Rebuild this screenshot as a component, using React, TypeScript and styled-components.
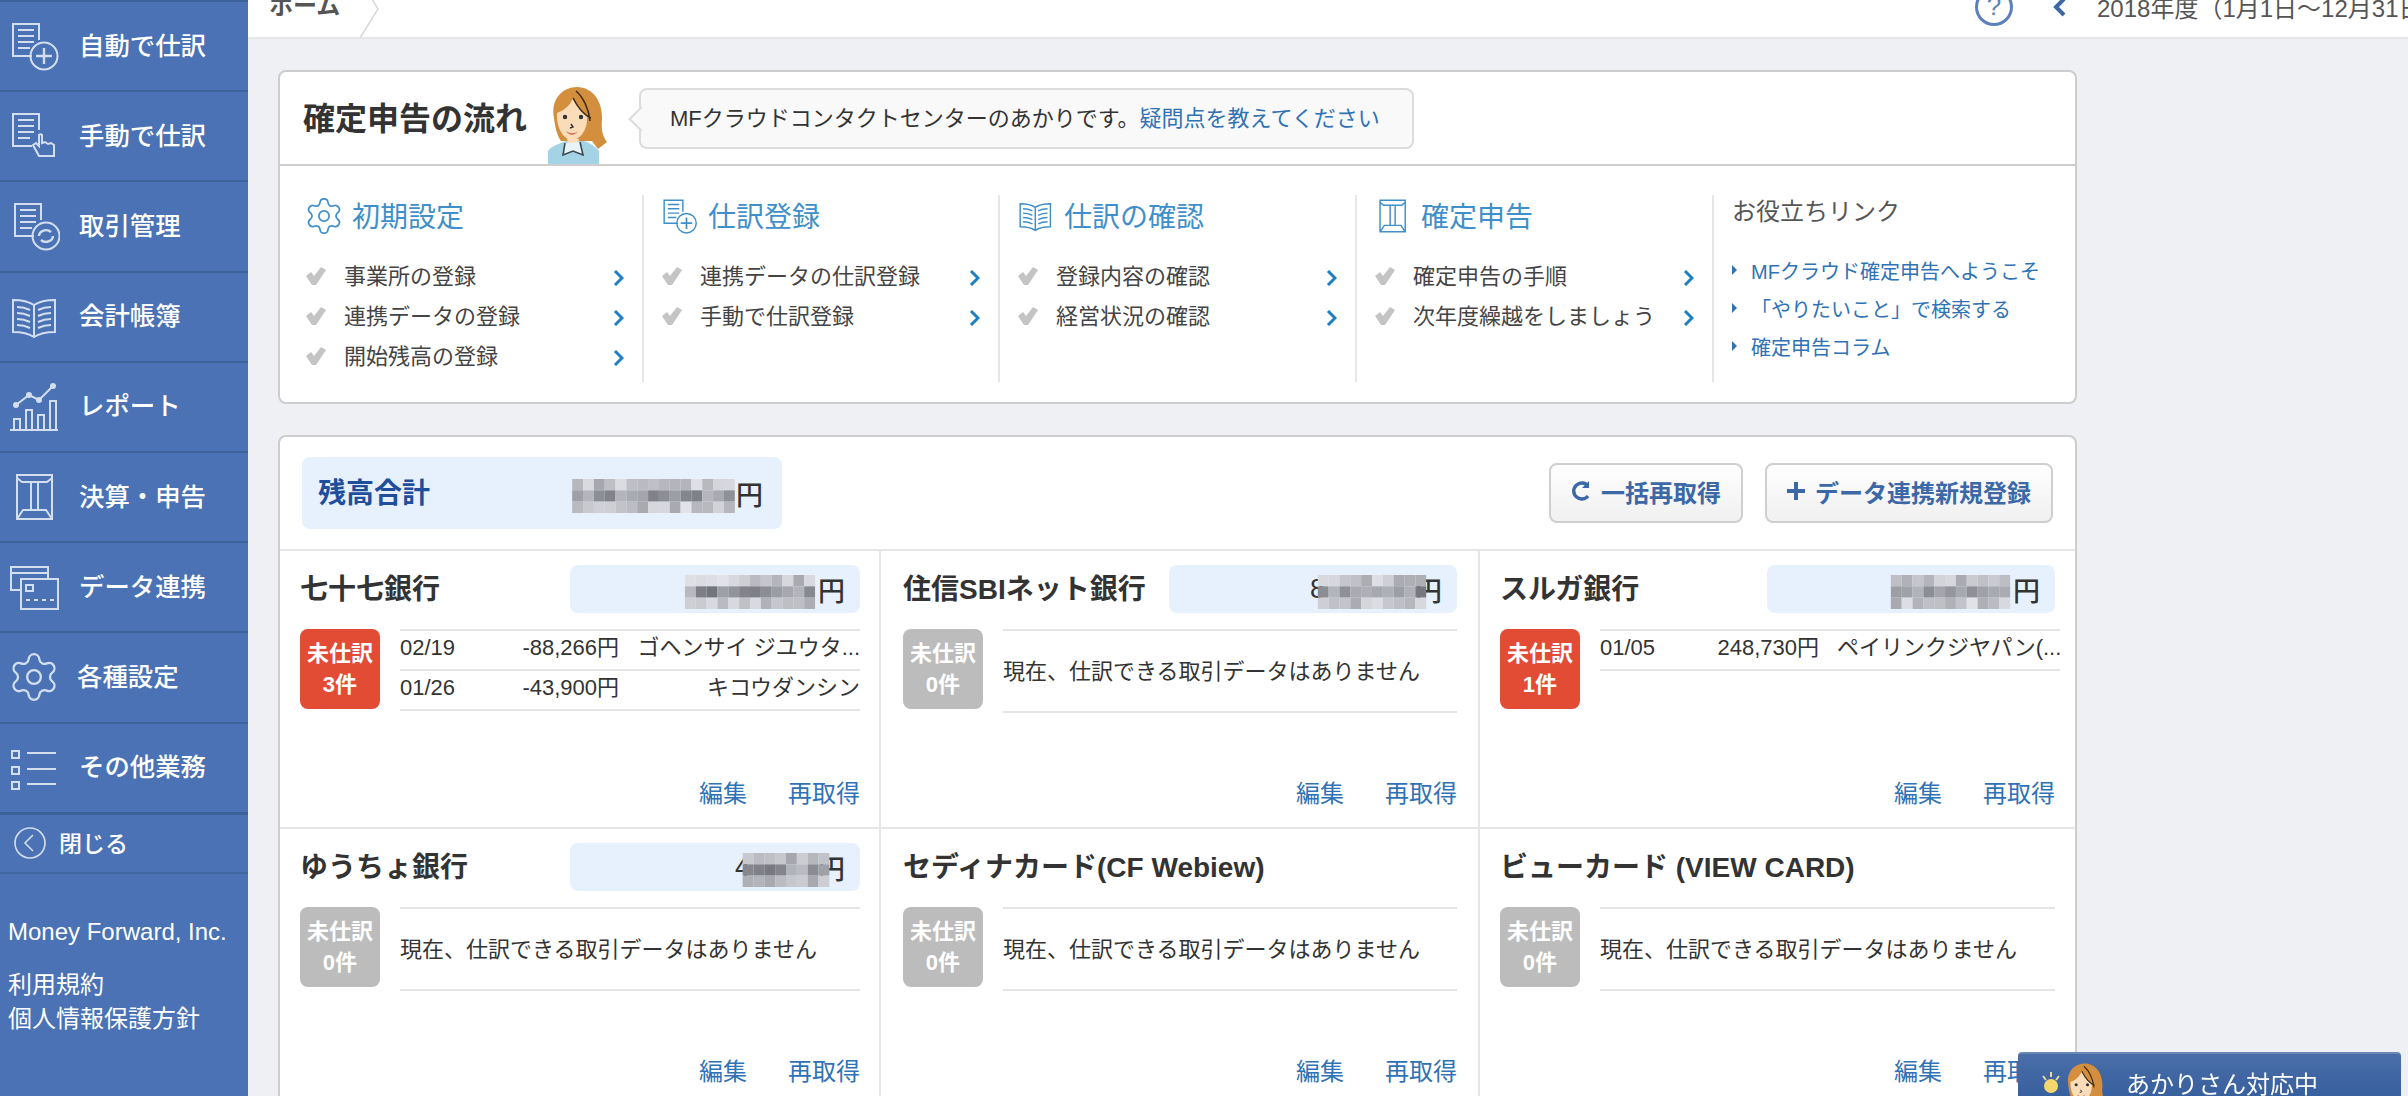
import React from "react";
import styled, { createGlobalStyle } from "styled-components";
import { Settings } from "lucide-react";

const GlobalStyle = createGlobalStyle`
    html, body {
        margin: 0;
        padding: 0;
        height: 100%;
        overflow: hidden;
        background: #eef0f4;
        color: #333;
        font-family: "Liberation Sans", "Noto Sans CJK JP", sans-serif;
    }
    * { box-sizing: border-box; }
`;

const Page = styled.div`
    display: flex;
    width: 2408px;
    height: 1096px;
    overflow: hidden;
`;

/* ---------- icons ---------- */

type IconProps = { size?: number };

const IconSvg = styled.svg`
    flex: none;
    fill: none;
    stroke: currentColor;
    stroke-width: 2;
`;

const DocLines = () => <>
    <path d="M29 19V3H3v32h19"/>
    <path d="M8 9h16M8 15h16M8 21h16M8 27h12"/>
</>;

const DocPlusIcon = ({size = 50}: IconProps) => <IconSvg width={size} height={size} viewBox="0 0 50 50">
    <DocLines/>
    <circle cx="34" cy="35" r="13.5"/>
    <path d="M34 27v16M26 35h16" strokeWidth="2.4"/>
</IconSvg>;

const DocHandIcon = ({size = 50}: IconProps) => <IconSvg width={size} height={size} viewBox="0 0 50 50">
    <DocLines/>
    <path d="M29 24v11l-3-3-3 2 6 11h15V34l-3-2-3 1-3-2-3 1v-8a2 2 0 0 0-3 0z"/>
</IconSvg>;

const DocRefreshIcon = ({size = 50}: IconProps) => <IconSvg width={size} height={size} viewBox="0 0 50 50">
    <g transform="translate(2 0)">
        <DocLines/>
        <circle cx="34" cy="35" r="13.5"/>
        <path d="M27 35a7 6 0 0 1 12-4M41 35a7 6 0 0 1-12 4" strokeWidth="2.4"/>
    </g>
</IconSvg>;

const BookIcon = ({size = 50}: IconProps) => <IconSvg width={size} height={size} viewBox="0 0 50 50">
    <path d="M24 13C18 9 10 8 3 8v32c7 0 15 1 21 5 6-4 14-5 21-5V8c-7 0-15 1-21 5zM24 13v32"/>
    <path d="M7 15c4 0 9 1 13 3M7 21c4 0 9 1 13 3M7 27c4 0 9 1 13 3M7 33c4 0 9 1 13 3M41 15c-4 0-9 1-13 3M41 21c-4 0-9 1-13 3M41 27c-4 0-9 1-13 3M41 33c-4 0-9 1-13 3"/>
</IconSvg>;

const ChartIcon = ({size = 50}: IconProps) => <IconSvg width={size} height={size} viewBox="0 0 50 50">
    <path d="M0 48h48M4 48V37h6v11M16 48V28h6v20M28 48V33h6v15M40 48V19h6v29"/>
    <path d="M6 23l13-10 10 5L43 4"/>
    <circle cx="6" cy="23" r="2" fill="currentColor"/>
    <circle cx="19" cy="13" r="2" fill="currentColor"/>
    <circle cx="29" cy="18" r="2" fill="currentColor"/>
    <circle cx="43" cy="4" r="2" fill="currentColor"/>
</IconSvg>;

const EnvelopeIcon = ({size = 50}: IconProps) => <IconSvg width={size} height={size} viewBox="0 0 50 50">
    <path d="M7 3h35v44H7zM7 6l5 4h25l5-4M21 10v28M28 10v28M7 47l6-9h23l6 9"/>
</IconSvg>;

const CardsIcon = ({size = 50}: IconProps) => <IconSvg width={size} height={size} viewBox="0 0 50 50">
    <path d="M38 17V5H1v23h10M1 11h37"/>
    <path d="M11 17h37v30H11z"/>
    <path d="M16 23h7v6h-7zM16 38h4M24 38h4M32 38h4M40 38h4"/>
</IconSvg>;

const ListIcon = ({size = 50}: IconProps) => <IconSvg width={size} height={size} viewBox="0 0 50 50">
    <path d="M2 8h7v7H2zM2 24h7v7H2zM2 39h7v7H2z"/>
    <path d="M17 10h29M17 26h29M17 41h29"/>
</IconSvg>;

const GearIcon = ({size = 50}: IconProps) => <Settings size={size} viewBox="1.5 1.5 21 21" strokeWidth={1}/>;

const CheckMark = () => <svg width="20" height="18" viewBox="0 0 20 18">
    <path d="M0 9l5-4 3 4 7-9 5 3-10 15H6z" fill="#c4c4c4"/>
</svg>;

const ChevronMark = () => <ChevronBox width="11" height="16" viewBox="0 0 11 16">
    <path d="M2 1l7 7-7 7" fill="none" stroke="#1f7fc4" strokeWidth="3"/>
</ChevronBox>;

const ChevronBox = styled.svg`
    margin-top: 3px;
`;

const Akari = ({height}: {height: number}) => <svg height={height} viewBox="0 0 62 79">
    <path d="M3 66c3-5 13-8 18-10h18c6 2 11 5 15 10v13H3z" fill="#a5d3e6"/>
    <path d="M9 33C5 14 18 2 32 2c16 0 26 15 25 33-1 10 1 17 5 22l-9 7-6-8H16c-4-6-6-14-7-23z" fill="#d38f3d"/>
    <path d="M12 28c6-2 13-7 16-15 4 9 9 15 14 18 1 14-7 24-15 24S11 43 12 28z" fill="#fbdcb9"/>
    <path d="M22 54h12l-2 8-4 3-4-3z" fill="#fbdcb9"/>
    <path d="M20 58l-2 12 10-4 10 4-3-13" fill="#e8f4f8" stroke="#3c4a50" strokeWidth="1.6"/>
    <path d="M28 13c5 10 11 17 18 20M31 6c7 6 13 18 14 30" fill="none" stroke="#3b2a18" strokeWidth="1.6"/>
    <circle cx="20" cy="32" r="2.2" fill="#333"/>
    <circle cx="36" cy="32" r="2.2" fill="#333"/>
    <path d="M26 39l2 3-3 1" fill="none" stroke="#333" strokeWidth="1.4"/>
    <path d="M21 46c4 3 9 3 12 0-3 5-9 5-12 0z" fill="#d9695a"/>
</svg>;

/* the amounts are pixelated out in the screenshot */
const Mosaic = ({cols, seed, $left = 0, $right = 0}: {cols: number, seed: number, $left?: number, $right?: number}) => {
    const rects = [];
    for (let r = 0; r < 3; r++) {
        for (let c = 0; c < cols; c++) {
            const n = Math.abs(Math.sin((c + 1) * 12.9898 + (r + 1) * 78.233 + seed) * 43758.5453) % 1;
            const base = r === 1 ? 115 + n * 70 : 165 + n * 60;
            const v = Math.round(base);
            rects.push(<rect key={r + "-" + c} x={c * 11} y={r * 11.5} width="11" height="11.5" fill={`rgb(${v},${v + 2},${v + 8})`}/>);
        }
    }
    return <MosaicSvg width={cols * 11} height={34} viewBox={`0 0 ${cols * 11} 34.5`} $left={$left} $right={$right}>{rects}</MosaicSvg>;
};

const MosaicSvg = styled.svg<{$left: number, $right: number}>`
    flex: none;
    position: relative;
    z-index: 1;
    margin-top: 6px;
    margin-left: ${p => p.$left}px;
    margin-right: ${p => p.$right}px;
    filter: blur(0.7px);
`;

/* ---------- sidebar ---------- */

const Sidebar = styled.nav`
    flex: none;
    width: 248px;
    height: 100%;
    background: #4a72b4;
    color: #fff;
`;

const NavItem = styled.a`
    display: flex;
    align-items: center;
    height: 90.2px;
    padding-left: 10px;
    gap: 19px;
    border-top: 2px solid #3d6299;
    font-size: 25.4px;
    font-weight: 500;
    svg { color: #d3deee; }
    span { padding-bottom: 5px; }
`;

const CloseRow = styled.a`
    display: flex;
    align-items: center;
    height: 62px;
    padding-left: 14px;
    gap: 13px;
    border-top: 3px solid #3d6299;
    border-bottom: 2px solid #41689f;
    font-size: 23px;
    font-weight: 500;
    svg { color: #d3deee; }
    span { padding-bottom: 3px; }
`;

const SideFooter = styled.div`
    padding: 41px 0 0 8px;
    font-size: 24px;
    line-height: 34px;
`;

const CompanyName = styled.div`
    margin-bottom: 19px;
`;

/* ---------- top bar ---------- */

const Main = styled.div`
    flex: 1;
    min-width: 0;
`;

const TopBar = styled.header`
    display: flex;
    align-items: center;
    height: 69px;
    margin-top: -30px;
    padding-left: 21px;
    background: #fff;
    border-bottom: 2px solid #e6e7ea;
`;

const Crumb = styled.span`
    font-size: 24px;
    font-weight: bold;
    color: #555;
`;

const CrumbArrow = styled.svg`
    flex: none;
    margin-left: 14px;
    fill: none;
    stroke: #d8d8d8;
    stroke-width: 1.5;
`;

const PeriodNav = styled.div`
    display: flex;
    align-items: center;
    margin-left: auto;
    padding-top: 6px;
`;

const HelpCircle = styled.span`
    display: flex;
    align-items: center;
    justify-content: center;
    width: 38px;
    height: 38px;
    margin-right: 39px;
    border: 3px solid #5b80ba;
    border-radius: 50%;
    color: #5b80ba;
    font-size: 26px;
`;

const PeriodText = styled.span`
    width: 311px;
    margin-left: 29px;
    overflow: hidden;
    white-space: nowrap;
    font-size: 24px;
    color: #555;
`;

/* ---------- flow card ---------- */

const Content = styled.div`
    width: 1799px;
    margin: 31px 0 0 30px;
`;

const Card = styled.section`
    background: #fff;
    border: 2px solid #cdcdcd;
    border-radius: 8px;
    margin-bottom: 31px;
`;

const FlowHead = styled.div`
    display: flex;
    height: 94px;
    padding-left: 23px;
    align-items: center;
    border-bottom: 2px solid #cdcdcd;
`;

const FlowTitle = styled.h1`
    margin: 0;
    width: 242px;
    padding-bottom: 5px;
    font-size: 32px;
    font-weight: bold;
    color: #333;
`;

const AvatarSlot = styled.div`
    align-self: flex-end;
    display: flex;
    width: 94px;
    height: 79px;
`;

const Bubble = styled.div`
    position: relative;
    display: flex;
    align-items: center;
    width: 775px;
    height: 61px;
    padding: 0 0 5px 29px;
    background: #f9f9f9;
    border: 2px solid #dcdcdc;
    border-radius: 8px;
    font-size: 22px;
    &::before {
        content: "";
        position: absolute;
        left: -9px;
        top: 20px;
        width: 16px;
        height: 16px;
        background: #f9f9f9;
        border-left: 2px solid #dcdcdc;
        border-bottom: 2px solid #dcdcdc;
        transform: rotate(45deg);
    }
`;

const TextLink = styled.a`
    color: #2f72b5;
`;

const FlowBody = styled.div`
    display: grid;
    grid-template-columns: 362px 356px 357px 357px 1fr;
    padding: 29px 0 20px;
`;

const StepCol = styled.div<{$first?: boolean}>`
    height: 187px;
    padding: 3px 18px 0 ${p => (p.$first ? 26 : 18)}px;
    border-left: ${p => (p.$first ? "none" : "2px solid #e6e6e6")};
`;

const StepTitle = styled.div`
    display: flex;
    align-items: center;
    gap: 10px;
    height: 36px;
    margin-bottom: 22px;
    color: #3f8fcb;
    font-size: 28px;
    span { padding-bottom: 3px; }
`;

const StepRow = styled.div`
    display: flex;
    align-items: center;
    height: 40px;
    font-size: 22px;
    color: #444;
`;

const StepLabel = styled.span`
    flex: 1;
    margin-left: 18px;
    padding-bottom: 5px;
    white-space: nowrap;
`;

const LinksTitle = styled.div`
    height: 36px;
    margin-bottom: 17px;
    font-size: 24px;
    line-height: 27px;
    color: #555;
`;

const HelpLink = styled(TextLink)`
    display: flex;
    align-items: center;
    gap: 14px;
    height: 38px;
    font-size: 20px;
    white-space: nowrap;
    &::before {
        content: "";
        flex: none;
        border-left: 5px solid #2f72b5;
        border-top: 5px solid transparent;
        border-bottom: 5px solid transparent;
    }
`;

/* ---------- accounts card ---------- */

const AccountsHead = styled.div`
    display: flex;
    align-items: center;
    justify-content: space-between;
    height: 114px;
    padding: 0 22px;
    border-bottom: 2px solid #e6e6e6;
`;

const TotalBox = styled.div`
    display: flex;
    align-items: center;
    justify-content: space-between;
    width: 480px;
    height: 72px;
    padding: 0 19px 0 16px;
    background: #e6f1fd;
    border-radius: 8px;
`;

const TotalLabel = styled.span`
    padding-bottom: 5px;
    font-size: 28px;
    font-weight: bold;
    color: #1f4f9c;
`;

const Amount = styled.span`
    display: flex;
    align-items: center;
    font-size: 27px;
    font-weight: 500;
    color: #333;
`;

const HeadButtons = styled.div`
    display: flex;
    gap: 22px;
`;

const Button = styled.button`
    display: flex;
    align-items: center;
    gap: 10px;
    height: 60px;
    padding: 0 20px 4px;
    background: linear-gradient(#fff, #f0f0f0);
    border: 2px solid #cfcfcf;
    border-radius: 8px;
    font-family: inherit;
    font-size: 24px;
    font-weight: bold;
    color: #3c68a8;
    svg { flex: none; }
`;

const BankGrid = styled.div`
    display: grid;
    grid-template-columns: 601px 599px 595px;
    height: 556px;
`;

const BankCell = styled.div<{$col: number}>`
    display: flex;
    flex-direction: column;
    height: 278px;
    min-width: 0;
    padding: 14px ${p => [19, 21, 20][p.$col]}px 16px ${p => (p.$col === 1 ? 22 : 20)}px;
    border-bottom: 2px solid #e6e6e6;
    border-right: ${p => (p.$col === 2 ? "none" : "2px solid #e6e6e6")};
`;

const BankHead = styled.div`
    display: flex;
    align-items: center;
    justify-content: space-between;
    height: 48px;
    margin-bottom: 16px;
`;

const BankName = styled.h2`
    margin: 0;
    padding-bottom: 4px;
    font-size: 28px;
    font-weight: bold;
    color: #333;
    white-space: nowrap;
`;

const BalanceChip = styled.div<{$col: number}>`
    display: flex;
    align-items: center;
    justify-content: flex-end;
    width: ${p => (p.$col === 0 ? 290 : 288)}px;
    height: 48px;
    padding-right: 15px;
    background: #e6f1fd;
    border-radius: 8px;
`;

const BankBody = styled.div`
    display: flex;
    align-items: flex-start;
    gap: 20px;
`;

const Badge = styled.div<{$active: boolean}>`
    flex: none;
    display: flex;
    flex-direction: column;
    align-items: center;
    justify-content: center;
    width: 80px;
    height: 80px;
    background: ${p => (p.$active ? "#e24c35" : "#bcbcbc")};
    border-radius: 8px;
    color: #fff;
    font-size: 22px;
    font-weight: bold;
    line-height: 31px;
`;

const TxList = styled.div`
    flex: 1;
    min-width: 460px;
    border-top: 2px solid #e5e5e5;
`;

const TxRow = styled.div`
    display: grid;
    grid-template-columns: 219px 223px;
    column-gap: 18px;
    align-items: baseline;
    height: 40px;
    padding-top: 1px;
    border-bottom: 2px solid #e5e5e5;
    font-size: 22px;
    line-height: 32px;
    color: #333;
`;

const TxDate = styled.span`
    display: flex;
    align-items: baseline;
    justify-content: space-between;
`;

const TxDesc = styled.span`
    text-align: right;
    white-space: nowrap;
    overflow: hidden;
`;

const EmptyNote = styled.div`
    flex: 1;
    display: flex;
    align-items: center;
    height: 84px;
    padding-bottom: 5px;
    border-top: 2px solid #e5e5e5;
    border-bottom: 2px solid #e5e5e5;
    font-size: 22px;
    color: #333;
`;

const CellLinks = styled.div`
    display: flex;
    justify-content: flex-end;
    gap: 41px;
    margin-top: auto;
    font-size: 24px;
    line-height: 34px;
`;

const ChatTab = styled.div`
    position: fixed;
    right: 7px;
    bottom: 0;
    display: flex;
    align-items: flex-start;
    width: 383px;
    height: 44px;
    padding: 8px 0 0 22px;
    overflow: hidden;
    background: linear-gradient(#4a6ea8, #37609e);
    border-top: 2px solid #6c87b3;
    border-radius: 4px 4px 0 0;
    color: #fff;
    font-size: 24px;
`;

const ChatBulb = styled.svg`
    flex: none;
    margin: 8px 0 0 0;
`;

const ChatText = styled.span`
    margin-left: 20px;
    padding-top: 3px;
    white-space: nowrap;
`;

/* ---------- data ---------- */

const navItems = [
    {label: "自動で仕訳", icon: <DocPlusIcon/>},
    {label: "手動で仕訳", icon: <DocHandIcon/>},
    {label: "取引管理", icon: <DocRefreshIcon/>},
    {label: "会計帳簿", icon: <BookIcon/>},
    {label: "レポート", icon: <ChartIcon/>},
    {label: "決算・申告", icon: <EnvelopeIcon/>},
    {label: "データ連携", icon: <CardsIcon/>},
    {label: "各種設定", icon: <GearIcon size={48}/>},
    {label: "その他業務", icon: <ListIcon/>},
];

const steps = [
    {title: "初期設定", icon: <GearIcon size={36}/>, items: ["事業所の登録", "連携データの登録", "開始残高の登録"]},
    {title: "仕訳登録", icon: <DocPlusIcon size={36}/>, items: ["連携データの仕訳登録", "手動で仕訳登録"]},
    {title: "仕訳の確認", icon: <BookIcon size={36}/>, items: ["登録内容の確認", "経営状況の確認"]},
    {title: "確定申告", icon: <EnvelopeIcon size={36}/>, items: ["確定申告の手順", "次年度繰越をしましょう"]},
];

const helpLinks = ["MFクラウド確定申告へようこそ", "「やりたいこと」で検索する", "確定申告コラム"];

type Bank = {
    name: string,
    mosaic?: {cols: number, seed: number, lead?: string, overlap?: boolean},
    count: number,
    rows: string[][],
};

const banks: Bank[] = [
    {name: "七十七銀行", mosaic: {cols: 12, seed: 3}, count: 3, rows: [
        ["02/19", "-88,266円", "ゴヘンサイ ジユウタ..."],
        ["01/26", "-43,900円", "キコウダンシン"],
    ]},
    {name: "住信SBIネット銀行", mosaic: {cols: 10, seed: 7, lead: "8", overlap: true}, count: 0, rows: []},
    {name: "スルガ銀行", mosaic: {cols: 11, seed: 11}, count: 1, rows: [
        ["01/05", "248,730円", "ペイリンクジヤパン(..."],
    ]},
    {name: "ゆうちょ銀行", mosaic: {cols: 8, seed: 17, lead: "4", overlap: true}, count: 0, rows: []},
    {name: "セディナカード(CF Webiew)", count: 0, rows: []},
    {name: "ビューカード (VIEW CARD)", count: 0, rows: []},
];

export default function App () {
    return <Page>
        <GlobalStyle/>
        <Sidebar>
            {navItems.map(item => <NavItem key={item.label}>{item.icon}<span>{item.label}</span></NavItem>)}
            <CloseRow>
                <svg width="32" height="32" viewBox="0 0 32 32" fill="none" stroke="currentColor" strokeWidth="1.6">
                    <circle cx="16" cy="16" r="15"/>
                    <path d="M19 8l-8 8 8 8"/>
                </svg>
                <span>閉じる</span>
            </CloseRow>
            <SideFooter>
                <CompanyName>Money Forward, Inc.</CompanyName>
                <div>利用規約</div>
                <div>個人情報保護方針</div>
            </SideFooter>
        </Sidebar>

        <Main>
            <TopBar>
                <Crumb>ホーム</Crumb>
                <CrumbArrow width="26" height="68" viewBox="0 0 26 68"><path d="M0 0l24 39-18 29"/></CrumbArrow>
                <PeriodNav>
                    <HelpCircle>?</HelpCircle>
                    <svg width="16" height="20" viewBox="0 0 16 20"><path d="M12 2L4 10l8 8" fill="none" stroke="#3c68a8" strokeWidth="4"/></svg>
                    <PeriodText>2018年度（1月1日〜12月31日）</PeriodText>
                </PeriodNav>
            </TopBar>

            <Content>
                <Card>
                    <FlowHead>
                        <FlowTitle>確定申告の流れ</FlowTitle>
                        <AvatarSlot><Akari height={79}/></AvatarSlot>
                        <Bubble>
                            <span>MFクラウドコンタクトセンターのあかりです。<TextLink>疑問点を教えてください</TextLink></span>
                        </Bubble>
                    </FlowHead>
                    <FlowBody>
                        {steps.map((step, i) => <StepCol key={step.title} $first={i === 0}>
                            <StepTitle>{step.icon}<span>{step.title}</span></StepTitle>
                            {step.items.map(label => <StepRow key={label}>
                                <CheckMark/>
                                <StepLabel>{label}</StepLabel>
                                <ChevronMark/>
                            </StepRow>)}
                        </StepCol>)}
                        <StepCol>
                            <LinksTitle>お役立ちリンク</LinksTitle>
                            {helpLinks.map(link => <HelpLink key={link}>{link}</HelpLink>)}
                        </StepCol>
                    </FlowBody>
                </Card>

                <Card>
                    <AccountsHead>
                        <TotalBox>
                            <TotalLabel>残高合計</TotalLabel>
                            <Amount><Mosaic cols={15} seed={1}/>円</Amount>
                        </TotalBox>
                        <HeadButtons>
                            <Button>
                                <svg width="20" height="24" viewBox="0 0 20 24" fill="none" stroke="#3c68a8" strokeWidth="3.4"><path d="M17 7a8 8 0 1 0 0 10"/><path d="M18 2v7h-7" fill="#3c68a8" stroke="none"/></svg>
                                一括再取得
                            </Button>
                            <Button>
                                <svg width="18" height="18" viewBox="0 0 18 18" fill="none" stroke="#3c68a8" strokeWidth="4"><path d="M9 0v18M0 9h18"/></svg>
                                データ連携新規登録
                            </Button>
                        </HeadButtons>
                    </AccountsHead>
                    <BankGrid>
                        {banks.map((bank, i) => <BankCell key={bank.name} $col={i % 3}>
                            <BankHead>
                                <BankName>{bank.name}</BankName>
                                {bank.mosaic && <BalanceChip $col={i % 3}>
                                    <Amount>
                                        {bank.mosaic.lead}
                                        <Mosaic cols={bank.mosaic.cols} seed={bank.mosaic.seed} $left={bank.mosaic.overlap ? -8 : 0} $right={bank.mosaic.overlap ? -12 : 2}/>
                                        円
                                    </Amount>
                                </BalanceChip>}
                            </BankHead>
                            <BankBody>
                                <Badge $active={bank.count > 0}><span>未仕訳</span><span>{bank.count}件</span></Badge>
                                {bank.rows.length > 0
                                    ? <TxList>{bank.rows.map(row => <TxRow key={row[0]}>
                                        <TxDate><span>{row[0]}</span><span>{row[1]}</span></TxDate>
                                        <TxDesc>{row[2]}</TxDesc>
                                    </TxRow>)}</TxList>
                                    : <EmptyNote>現在、仕訳できる取引データはありません</EmptyNote>}
                            </BankBody>
                            <CellLinks><TextLink>編集</TextLink><TextLink>再取得</TextLink></CellLinks>
                        </BankCell>)}
                    </BankGrid>
                </Card>
            </Content>
        </Main>

        <ChatTab>
            <ChatBulb width="22" height="26" viewBox="0 0 22 26">
                <circle cx="11" cy="16" r="7" fill="#f5d76e"/>
                <path d="M3 6l3 4M11 2v5M19 6l-3 4" stroke="#e8d9a0" strokeWidth="2"/>
            </ChatBulb>
            <Akari height={56}/>
            <ChatText>あかりさん対応中</ChatText>
        </ChatTab>
    </Page>;
}
